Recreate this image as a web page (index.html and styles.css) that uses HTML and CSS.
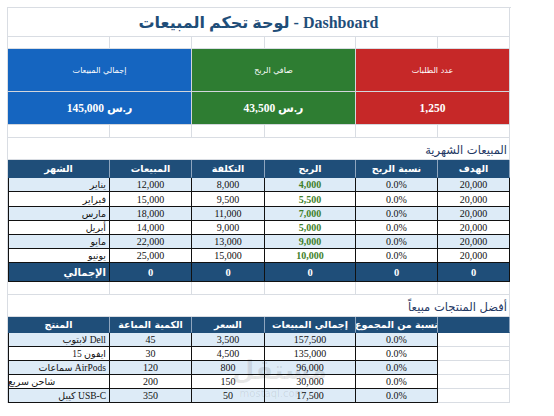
FILE: index.html
```html
<!DOCTYPE html>
<html>
<head>
    <title>Dashboard - لوحة تحكم المبيعات</title>
    <link rel="stylesheet" href="styles.css">
</head>
<body>
    <div class="sheet">
        <div class="c title" dir="rtl">Dashboard - لوحة تحكم المبيعات</div>

        <div class="c"></div><div class="c"></div><div class="c"></div><div class="c"></div><div class="c"></div><div class="c"></div>

        <div class="c kpi blue lbl" dir="rtl">إجمالي المبيعات</div>
        <div class="c kpi green lbl" dir="rtl">صافي الربح</div>
        <div class="c kpi red lbl" dir="rtl">عدد الطلبات</div>
        <div class="c kpi blue val" dir="rtl">ر.س 145,000</div>
        <div class="c kpi green val" dir="rtl">ر.س 43,500</div>
        <div class="c kpi red val">1,250</div>

        <div class="c"></div><div class="c"></div><div class="c"></div><div class="c"></div><div class="c"></div><div class="c"></div>

        <div class="c section" dir="rtl">المبيعات الشهرية</div>

        <div class="c th first">الشهر</div>
        <div class="c th">المبيعات</div>
        <div class="c th">التكلفة</div>
        <div class="c th">الربح</div>
        <div class="c th">نسبة الربح</div>
        <div class="c th">الهدف</div>

        <div class="c t alt first name">يناير</div><div class="c t alt">12,000</div><div class="c t alt">8,000</div><div class="c t alt profit">4,000</div><div class="c t alt">0.0%</div><div class="c t alt">20,000</div>
        <div class="c t first name">فبراير</div><div class="c t">15,000</div><div class="c t">9,500</div><div class="c t profit">5,500</div><div class="c t">0.0%</div><div class="c t">20,000</div>
        <div class="c t alt first name">مارس</div><div class="c t alt">18,000</div><div class="c t alt">11,000</div><div class="c t alt profit">7,000</div><div class="c t alt">0.0%</div><div class="c t alt">20,000</div>
        <div class="c t first name">أبريل</div><div class="c t">14,000</div><div class="c t">9,000</div><div class="c t profit">5,000</div><div class="c t">0.0%</div><div class="c t">20,000</div>
        <div class="c t alt first name">مايو</div><div class="c t alt">22,000</div><div class="c t alt">13,000</div><div class="c t alt profit">9,000</div><div class="c t alt">0.0%</div><div class="c t alt">20,000</div>
        <div class="c t first name">يونيو</div><div class="c t">25,000</div><div class="c t">15,000</div><div class="c t profit">10,000</div><div class="c t">0.0%</div><div class="c t">20,000</div>

        <div class="c t total first name">الإجمالي</div><div class="c t total">0</div><div class="c t total">0</div><div class="c t total">0</div><div class="c t total">0</div><div class="c t total">0</div>

        <div class="c"></div><div class="c"></div><div class="c"></div><div class="c"></div><div class="c"></div><div class="c"></div>

        <div class="c section" dir="rtl">أفضل المنتجات مبيعاً</div>

        <div class="c th first">المنتج</div>
        <div class="c th">الكمية المباعة</div>
        <div class="c th">السعر</div>
        <div class="c th">إجمالي المبيعات</div>
        <div class="c th">نسبة من المجموع</div>
        <div class="c th"></div>

        <div class="c t alt first name">لابتوب Dell</div><div class="c t alt">45</div><div class="c t alt">3,500</div><div class="c t alt">157,500</div><div class="c t alt">0.0%</div><div class="c"></div>
        <div class="c t first name">ايفون 15</div><div class="c t">30</div><div class="c t">4,500</div><div class="c t">135,000</div><div class="c t">0.0%</div><div class="c"></div>
        <div class="c t alt first name">سماعات AirPods</div><div class="c t alt">120</div><div class="c t alt">800</div><div class="c t alt">96,000</div><div class="c t alt">0.0%</div><div class="c"></div>
        <div class="c t first name" dir="rtl">شاحن سريع</div><div class="c t">200</div><div class="c t">150</div><div class="c t">30,000</div><div class="c t">0.0%</div><div class="c"></div>
        <div class="c t alt first name">كيبل USB-C</div><div class="c t alt">350</div><div class="c t alt">50</div><div class="c t alt">17,500</div><div class="c t alt">0.0%</div><div class="c"></div>
    </div>

    <div class="watermark">
        <div class="wm-logo">مستقل</div>
        <div class="wm-url">mostaql.com</div>
    </div>
</body>
</html>
```

FILE: styles.css
```css
body { margin: 0; background: #fff; font-family: "Liberation Serif", "DejaVu Sans", serif; }

.sheet {
    display: grid;
    grid-template-columns: 102px 82px 73px 91px 82px 72px;
    grid-template-rows: 29px 12px 43px 33px 13px 22px 18px 14px 15px 14px 14px 14px 14px 19px 13px 22px 16px 14px 14px 14px 14px 14px;
    width: 503px;
    margin: 7px 0 0 7px;
    border-top: 1px solid #d9dde3;
    border-left: 1px solid #d9dde3;
}

.c {
    box-sizing: border-box;
    border-right: 1px solid #d9dde3;
    border-bottom: 1px solid #d9dde3;
    display: flex;
    align-items: center;
    justify-content: center;
    font-size: 10px;
    color: #111;
    white-space: nowrap;
    overflow: hidden;
}

.title { grid-column: span 6; color: #1f4e79; font-weight: bold; font-size: 16px; }

.kpi { grid-column: span 2; color: #fff; border-color: #d3d6dc; }
.blue { background: #1565c0; }
.green { background: #2e7d32; }
.red { background: #c62828; }
.lbl { font-family: "DejaVu Sans", sans-serif; font-size: 8px; }
.val { font-size: 11.5px; font-weight: bold; }

.section {
    grid-column: span 6;
    justify-content: flex-start;
    align-items: flex-end;
    padding: 0 2px 2px 0;
    font-family: "DejaVu Sans", sans-serif;
    font-size: 11.5px;
    color: #1f3864;
}

.th {
    background: #1f4e79;
    color: #fff;
    font-family: "DejaVu Sans", sans-serif;
    font-weight: bold;
    font-size: 9.5px;
    border-right-color: #8fa6bf;
    border-bottom-color: #1f4e79;
}

.t { border-color: #111; }
.first { box-shadow: inset 1px 0 #111; }
.th.first { box-shadow: none; }
.alt { background: #ddebf7; }
.name { justify-content: flex-end; padding-right: 3px; font-size: 9.5px; }
.profit { color: #3f7f2a; font-weight: bold; }
.total { background: #1f4e79; color: #fff; font-weight: bold; font-size: 10.5px; }
.total.name { font-family: "DejaVu Sans", sans-serif; font-size: 10px; }

.watermark {
    position: absolute;
    left: 232px;
    top: 352px;
    width: 80px;
    color: rgba(0, 0, 0, 0.09);
    text-align: center;
    pointer-events: none;
}
.wm-logo { font-family: "DejaVu Sans", sans-serif; font-size: 26px; font-weight: bold; line-height: 36px; }
.wm-url { font-family: "DejaVu Sans", sans-serif; font-size: 10px; }
```
